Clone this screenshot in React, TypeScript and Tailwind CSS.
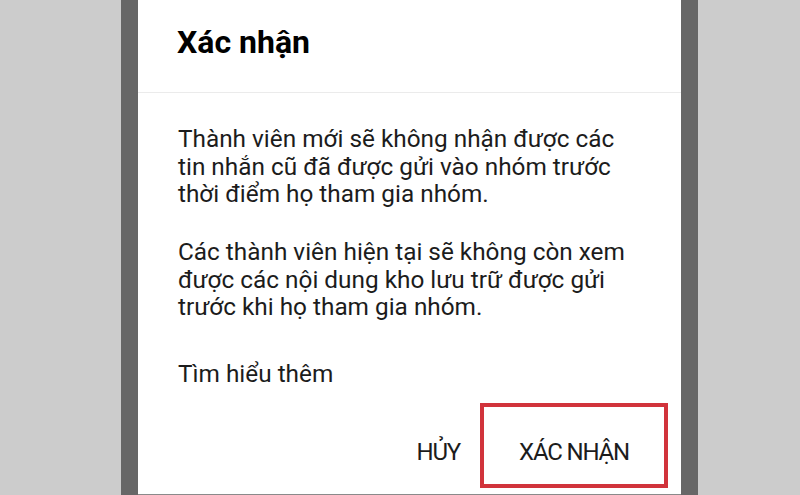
import React from "react";

export default function App() {
  const font = { fontFamily: "Roboto, 'Noto Sans', 'DejaVu Sans', sans-serif" };
  return (
    <div className="w-[800px] h-[495px] flex bg-[#cccccc] overflow-hidden" style={font}>
      <div className="w-[121px] shrink-0 bg-[#cccccc]" />
      <div className="w-[17px] shrink-0 bg-[#676767]" />
      <div className="w-[543px] shrink-0 bg-white flex flex-col relative">
        <div className="h-[92px] shrink-0 pl-[39px] pt-[24px]">
          <h1 className="text-[32px] leading-[37px] font-bold text-black">Xác nhận</h1>
        </div>
        <div className="h-px shrink-0 bg-[#ebebeb]" />
        <div className="pl-[40px] pr-[20px] pt-[32px] text-[24.35px] leading-[27.5px] text-[#1c1c1c]">
          <p>
            Thành viên mới sẽ không nhận được các
            <br />
            tin nhắn cũ đã được gửi vào nhóm trước
            <br />
            thời điểm họ tham gia nhóm.
          </p>
          <p className="mt-[30.5px]">
            Các thành viên hiện tại sẽ không còn xem
            <br />
            được các nội dung kho lưu trữ được gửi
            <br />
            trước khi họ tham gia nhóm.
          </p>
          <p className="mt-[39.5px]">Tìm hiểu thêm</p>
        </div>
        <div className="flex justify-end items-start mt-[15.5px] pr-[13px]">
          <span className="mt-[35px] mr-[20px] text-[24px] leading-[28px] tracking-[-1.2px] text-[#1c1c1c]">
            HỦY
          </span>
          <div className="w-[188px] h-[85px] border-4 border-[#d1333b] flex justify-center pt-[31px]">
            <span className="text-[24px] leading-[28px] tracking-[-1.2px] text-[#1c1c1c]">XÁC NHẬN</span>
          </div>
        </div>
        <div className="absolute left-0 right-0 bottom-0 h-[1.5px] bg-[#8a8a8a]" />
      </div>
      <div className="w-[17px] shrink-0 bg-[#676767]" />
      <div className="flex-1 bg-[#cccccc]" />
    </div>
  );
}
